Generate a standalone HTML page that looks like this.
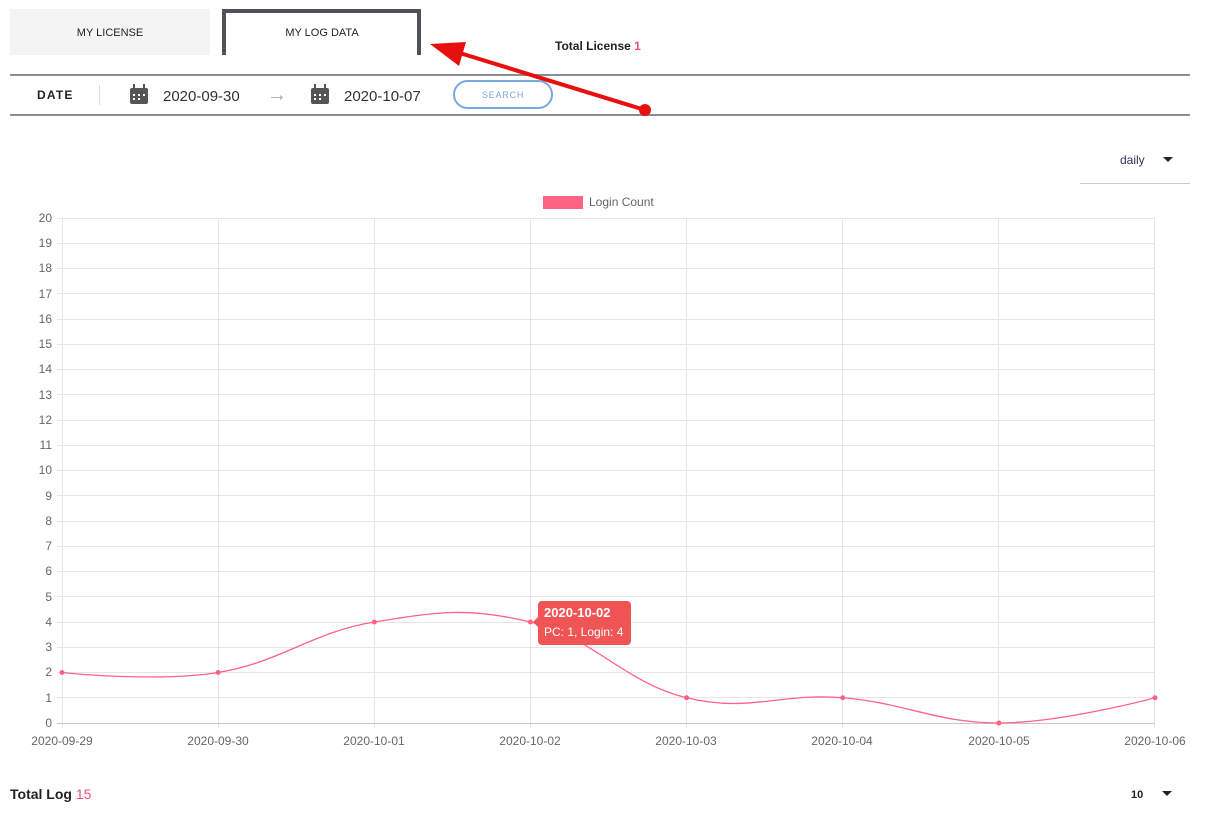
<!DOCTYPE html>
<html><head><meta charset="utf-8"><style>
body{margin:0;width:1213px;height:814px;background:#fff;overflow:hidden;font-family:"Liberation Sans",sans-serif}
svg{position:absolute;left:0;top:0}
</style></head><body>
<svg width="1213" height="814" viewBox="0 0 1213 814" font-family="Liberation Sans, sans-serif">
<rect x="10" y="9" width="200" height="46" fill="#f4f4f4"/>
<text x="110" y="36" text-anchor="middle" font-size="11" fill="#222">MY LICENSE</text>
<path d="M224 55 V11 H419 V55" fill="none" stroke="#4f5258" stroke-width="4"/>
<text x="322" y="36" text-anchor="middle" font-size="11" fill="#222">MY LOG DATA</text>
<text x="555" y="50" font-size="12" font-weight="bold" fill="#222">Total License <tspan fill="#f0506e">1</tspan></text>
<rect x="10" y="74" width="1180" height="2" fill="#8a8d93"/>
<rect x="10" y="114" width="1180" height="2" fill="#8a8d93"/>
<text x="37" y="99" font-size="12" font-weight="bold" letter-spacing="1.2" fill="#222">DATE</text>
<rect x="99" y="85" width="1" height="20" fill="#ddd"/>
<g fill="#555">
<rect x="130" y="88" width="18" height="16" rx="2"/><rect x="133" y="84" width="2" height="5"/><rect x="143" y="84" width="2" height="5"/>
<rect x="311" y="88" width="18" height="16" rx="2"/><rect x="314" y="84" width="2" height="5"/><rect x="324" y="84" width="2" height="5"/>
</g>
<g fill="#fff"><rect x="133" y="94" width="2" height="2"/><rect x="138" y="94" width="2" height="2"/><rect x="143" y="94" width="2" height="2"/><rect x="133" y="98" width="2" height="2"/><rect x="138" y="98" width="2" height="2"/>
<rect x="314" y="94" width="2" height="2"/><rect x="319" y="94" width="2" height="2"/><rect x="324" y="94" width="2" height="2"/><rect x="314" y="98" width="2" height="2"/><rect x="319" y="98" width="2" height="2"/></g>
<text x="163" y="101" font-size="15" fill="#333">2020-09-30</text>
<text x="267" y="101" font-size="20" fill="#aaa">→</text>
<text x="344" y="101" font-size="15" fill="#333">2020-10-07</text>
<rect x="454" y="81" width="98" height="27" rx="13.5" fill="#fff" stroke="#7aa8e0" stroke-width="2"/>
<text x="503" y="98" text-anchor="middle" font-size="9" letter-spacing="0.8" fill="#7aa8e0">SEARCH</text>
<line x1="645" y1="110" x2="450" y2="50" stroke="#e8100e" stroke-width="4"/>
<polygon points="430,44 466,42 459,66" fill="#e8100e"/>
<circle cx="645" cy="110" r="6" fill="#e8100e"/>
<text x="1120" y="164" font-size="12" fill="#335">daily</text>
<polygon points="1163,157 1173,157 1168,162" fill="#222"/>
<rect x="1080" y="183" width="110" height="1" fill="#ccc"/>
<rect x="543" y="196" width="40" height="13" fill="#ff6384"/>
<text x="589" y="206" font-size="12" fill="#666">Login Count</text>
<g stroke="#e6e6e6" stroke-width="1">
<line x1="57" x2="1155" y1="218.5" y2="218.5"/><line x1="57" x2="1155" y1="243.5" y2="243.5"/><line x1="57" x2="1155" y1="268.5" y2="268.5"/><line x1="57" x2="1155" y1="293.5" y2="293.5"/><line x1="57" x2="1155" y1="319.5" y2="319.5"/><line x1="57" x2="1155" y1="344.5" y2="344.5"/><line x1="57" x2="1155" y1="369.5" y2="369.5"/><line x1="57" x2="1155" y1="394.5" y2="394.5"/><line x1="57" x2="1155" y1="420.5" y2="420.5"/><line x1="57" x2="1155" y1="445.5" y2="445.5"/><line x1="57" x2="1155" y1="470.5" y2="470.5"/><line x1="57" x2="1155" y1="495.5" y2="495.5"/><line x1="57" x2="1155" y1="521.5" y2="521.5"/><line x1="57" x2="1155" y1="546.5" y2="546.5"/><line x1="57" x2="1155" y1="571.5" y2="571.5"/><line x1="57" x2="1155" y1="596.5" y2="596.5"/><line x1="57" x2="1155" y1="622.5" y2="622.5"/><line x1="57" x2="1155" y1="647.5" y2="647.5"/><line x1="57" x2="1155" y1="672.5" y2="672.5"/><line x1="57" x2="1155" y1="697.5" y2="697.5"/>
<line y1="218" y2="728" x1="62.5" x2="62.5"/><line y1="218" y2="728" x1="218.5" x2="218.5"/><line y1="218" y2="728" x1="374.5" x2="374.5"/><line y1="218" y2="728" x1="530.5" x2="530.5"/><line y1="218" y2="728" x1="686.5" x2="686.5"/><line y1="218" y2="728" x1="842.5" x2="842.5"/><line y1="218" y2="728" x1="998.5" x2="998.5"/><line y1="218" y2="728" x1="1154.5" x2="1154.5"/>
</g>
<line x1="57" x2="1155" y1="723.5" y2="723.5" stroke="#c8c8c8"/>
<g font-size="12" fill="#666" text-anchor="end">
<text x="52" y="222">20</text><text x="52" y="247">19</text><text x="52" y="272">18</text><text x="52" y="298">17</text><text x="52" y="323">16</text><text x="52" y="348">15</text><text x="52" y="373">14</text><text x="52" y="399">13</text><text x="52" y="424">12</text><text x="52" y="449">11</text><text x="52" y="474">10</text><text x="52" y="500">9</text><text x="52" y="525">8</text><text x="52" y="550">7</text><text x="52" y="575">6</text><text x="52" y="601">5</text><text x="52" y="626">4</text><text x="52" y="651">3</text><text x="52" y="676">2</text><text x="52" y="702">1</text><text x="52" y="727">0</text>
</g>
<g font-size="12" fill="#666" text-anchor="middle">
<text x="62" y="745">2020-09-29</text><text x="218" y="745">2020-09-30</text><text x="374" y="745">2020-10-01</text><text x="530" y="745">2020-10-02</text><text x="686" y="745">2020-10-03</text><text x="842" y="745">2020-10-04</text><text x="999" y="745">2020-10-05</text><text x="1155" y="745">2020-10-06</text>
</g>
<path d="M62 672.5 C62 672.5 155.6 682.6 218.1 672.5 C280.6 662.4 311.8 632.1 374.3 622 C436.8 611.9 467.9 606.85 530.4 622 C592.9 637.15 624.1 682.6 686.6 697.75 C749.1 712.9 780.2 692.7 842.7 697.75 C905.2 702.8 936.4 723 998.9 723 C1061.4 723 1155 697.75 1155 697.75" fill="none" stroke="#ff6384" stroke-width="1.3"/>
<g fill="#ff6384"><circle cx="62" cy="672.5" r="2.5"/><circle cx="218.1" cy="672.5" r="2.5"/><circle cx="374.3" cy="622" r="2.5"/><circle cx="530.4" cy="622" r="2.5"/><circle cx="686.6" cy="697.75" r="2.5"/><circle cx="842.7" cy="697.75" r="2.5"/><circle cx="998.9" cy="723" r="2.5"/><circle cx="1155" cy="697.75" r="2.5"/></g>
<rect x="538" y="601" width="93" height="44" rx="4" fill="#f05454"/>
<polygon points="538,617 533,622 538,627" fill="#f05454"/>
<text x="544" y="617" font-size="13" font-weight="bold" fill="#fff">2020-10-02</text>
<text x="544" y="636" font-size="12" fill="#fff">PC: 1, Login: 4</text>
<text x="10" y="799" font-size="14" font-weight="bold" fill="#222">Total Log <tspan fill="#f0506e" font-weight="normal">15</tspan></text>
<text x="1131" y="798" font-size="11" font-weight="bold" fill="#222">10</text>
<polygon points="1162,791 1172,791 1167,796" fill="#222"/>
</svg>
</body></html>
